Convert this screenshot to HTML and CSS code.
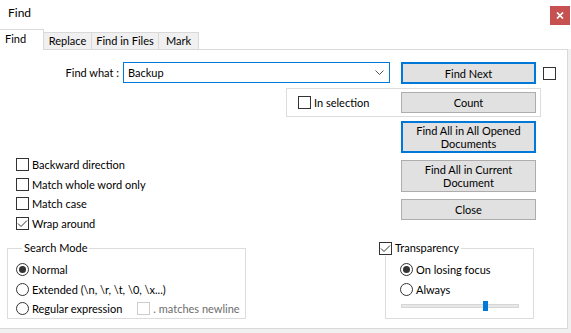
FILE: index.html
```html
<html>
<head>
<meta charset="utf-8">
<link rel="stylesheet" href="styles.css">
</head>
<body>
<div class="titlebar">
	<div class="title">Find</div>
	<div class="close_btn"><svg width="8" height="7" viewBox="0 0 8 7"><path d="M1 0.5 L7 6.5 M7 0.5 L1 6.5" stroke="#fff" stroke-width="1.7"/></svg></div>
</div>
<div class="tabs">
	<div class="tab active">Find</div>
	<div class="tab t_replace">Replace</div>
	<div class="tab t_files">Find in Files</div>
	<div class="tab t_mark">Mark</div>
</div>
<div class="frame">
<div class="panel">
	<div class="find_row">
		<div class="find_label">Find what :</div>
		<div class="combo">
			<span>Backup</span>
			<svg width="9" height="5" viewBox="0 0 9 5"><polyline points="0.5,0.5 4.5,4.5 8.5,0.5" fill="none" stroke="#555" stroke-width="1"/></svg>
		</div>
		<div class="btn default find_next">Find Next</div>
		<div class="cb cb_side"></div>
	</div>
	<div class="sel_row">
		<div class="sel_group">
			<div class="sel_label"><span class="cb"></span><span class="lbl">In selection</span></div>
			<div class="btn count">Count</div>
		</div>
	</div>
	<div class="main">
		<div class="options">
			<div class="opt"><span class="cb"></span><span class="lbl">Backward direction</span></div>
			<div class="opt"><span class="cb"></span><span class="lbl">Match whole word only</span></div>
			<div class="opt"><span class="cb"></span><span class="lbl">Match case</span></div>
			<div class="opt"><span class="cb checked"><svg width="11" height="11" viewBox="0 0 11 11"><polyline points="1,5.5 4,8.5 10,2.5" fill="none" stroke="#333" stroke-width="1"/></svg></span><span class="lbl">Wrap around</span></div>
		</div>
		<div class="buttons">
			<div class="btn default tall">Find All in All Opened<br>Documents</div>
			<div class="btn tall">Find All in Current<br>Document</div>
			<div class="btn close">Close</div>
		</div>
	</div>
	<div class="bottom">
		<fieldset class="mode">
			<legend>Search Mode</legend>
			<div class="opt"><span class="radio on"></span><span class="lbl">Normal</span></div>
			<div class="opt"><span class="radio"></span><span class="lbl">Extended (\n, \r, \t, \0, \x...)</span></div>
			<div class="opt"><span class="radio"></span><span class="lbl">Regular expression</span><span class="cb disabled"></span><span class="lbl gray">. matches newline</span></div>
		</fieldset>
		<fieldset class="transp">
			<legend><span class="cb checked"><svg width="11" height="11" viewBox="0 0 11 11"><polyline points="1,5.5 4,8.5 10,2.5" fill="none" stroke="#333" stroke-width="1"/></svg></span><span class="lbl">Transparency</span></legend>
			<div class="opt"><span class="radio on"></span><span class="lbl">On losing focus</span></div>
			<div class="opt"><span class="radio"></span><span class="lbl">Always</span></div>
			<div class="slider"><div class="track"><div class="thumb"></div></div></div>
		</fieldset>
	</div>
</div>
</div>
</body>
</html>
```

FILE: styles.css
```css
* {
	box-sizing: border-box;
}
body {
	margin: 0;
	width: 571px;
	height: 333px;
	overflow: hidden;
	background: #fff;
	font-family: Lato, "Noto Sans", sans-serif;
	font-size: 11px;
	color: #000;
}

.titlebar {
	height: 29px;
	display: flex;
	justify-content: space-between;
	align-items: flex-start;
}
.title {
	padding: 5px 0 0 8px;
	line-height: 16px;
	font-size: 12px;
}
.close_btn {
	width: 20px;
	height: 19px;
	margin: 6px 1px 0 0;
	background: #c75050;
	display: flex;
	align-items: center;
	justify-content: center;
}

.tabs {
	display: flex;
	align-items: flex-end;
	height: 20px;
	position: relative;
	z-index: 1;
}
.tab {
	height: 17px;
	background: #f0f0f0;
	border-top: 1px solid #d9d9d9;
	border-right: 1px solid #d9d9d9;
	line-height: 16px;
	text-align: center;
}
.tab.active {
	width: 44px;
	height: 21px;
	margin-bottom: -1px;
	background: #fff;
	text-align: left;
	padding-left: 5px;
	line-height: 17px;
}
.t_replace { width: 48px; }
.t_files { width: 67px; }
.t_mark { width: 40px; }

.frame {
	height: 284px;
	width: 571px;
	background: #f0f0f0;
}
.panel {
	width: 568px;
	height: 280px;
	background: #fff;
	border: 1px solid #d9d9d9;
	border-left: none;
}

.cb, .radio {
	display: inline-flex;
	align-items: center;
	justify-content: center;
	flex-shrink: 0;
	width: 13px;
	height: 13px;
	border: 1px solid #333;
	background: #fff;
}
.radio {
	border-radius: 50%;
}
.radio.on::after {
	content: "";
	width: 7px;
	height: 7px;
	border-radius: 50%;
	background: #333;
}
.cb.disabled {
	border-color: #cccccc;
	margin-left: 15px;
}
.lbl {
	margin-left: 3px;
	white-space: nowrap;
}
.gray {
	color: #6d6d6d;
}

.btn {
	width: 135px;
	background: #e1e1e1;
	border: 1px solid #adadad;
	display: flex;
	align-items: center;
	justify-content: center;
	text-align: center;
	line-height: 13px;
	flex-shrink: 0;
}
.btn.default {
	border: 2px solid #0078d7;
}

.find_row {
	display: flex;
	align-items: flex-start;
	margin-top: 12px;
}
.find_label {
	width: 123px;
	padding-right: 4px;
	text-align: right;
	line-height: 21px;
}
.combo {
	width: 267px;
	height: 21px;
	border: 1px solid #0078d7;
	display: flex;
	align-items: center;
	justify-content: space-between;
	padding: 0 5px 0 4px;
}
.find_next {
	height: 22px;
	margin-left: 11px;
}
.cb_side {
	margin: 5px 0 0 7px;
}

.sel_row {
	margin-top: 4px;
}
.sel_group {
	margin-left: 286px;
	width: 255px;
	height: 29px;
	border: 1px solid #dcdcdc;
	display: flex;
	align-items: center;
}
.sel_label {
	width: 114px;
	padding-left: 11px;
	display: flex;
	align-items: center;
}
.count {
	height: 21px;
}

.main {
	display: flex;
	margin-top: 4px;
}
.options {
	width: 401px;
	padding: 34px 0 0 16px;
}
.opt {
	display: flex;
	align-items: center;
	height: 19.5px;
}
.buttons {
	display: flex;
	flex-direction: column;
	gap: 7px;
}
.tall {
	height: 32px;
}
.close {
	height: 21px;
}

.bottom {
	display: flex;
	margin-top: 7px;
}
fieldset {
	margin: 0;
	min-width: 0;
	padding: 4px 0 0 8px;
	border: 1px solid #dcdcdc;
	height: 79px;
}
legend {
	padding: 0 2px;
	line-height: 16px;
	display: flex;
	align-items: center;
}
.mode {
	margin-left: 7px;
	width: 239px;
}
.mode legend {
	margin-left: 6px;
}
.transp {
	margin-left: 139px;
	width: 149px;
	padding-left: 14px;
}
.transp legend {
	margin-left: -21px;
	padding: 0 2px 0 0;
}
.slider {
	height: 14px;
	display: flex;
	align-items: center;
	margin-left: 1px;
}
.track {
	width: 118px;
	height: 4px;
	background: #e7e7e7;
	border: 1px solid #d6d6d6;
	display: flex;
	align-items: center;
}
.thumb {
	width: 5px;
	height: 10px;
	margin-left: 81px;
	background: #0078d7;
	flex-shrink: 0;
}
```
